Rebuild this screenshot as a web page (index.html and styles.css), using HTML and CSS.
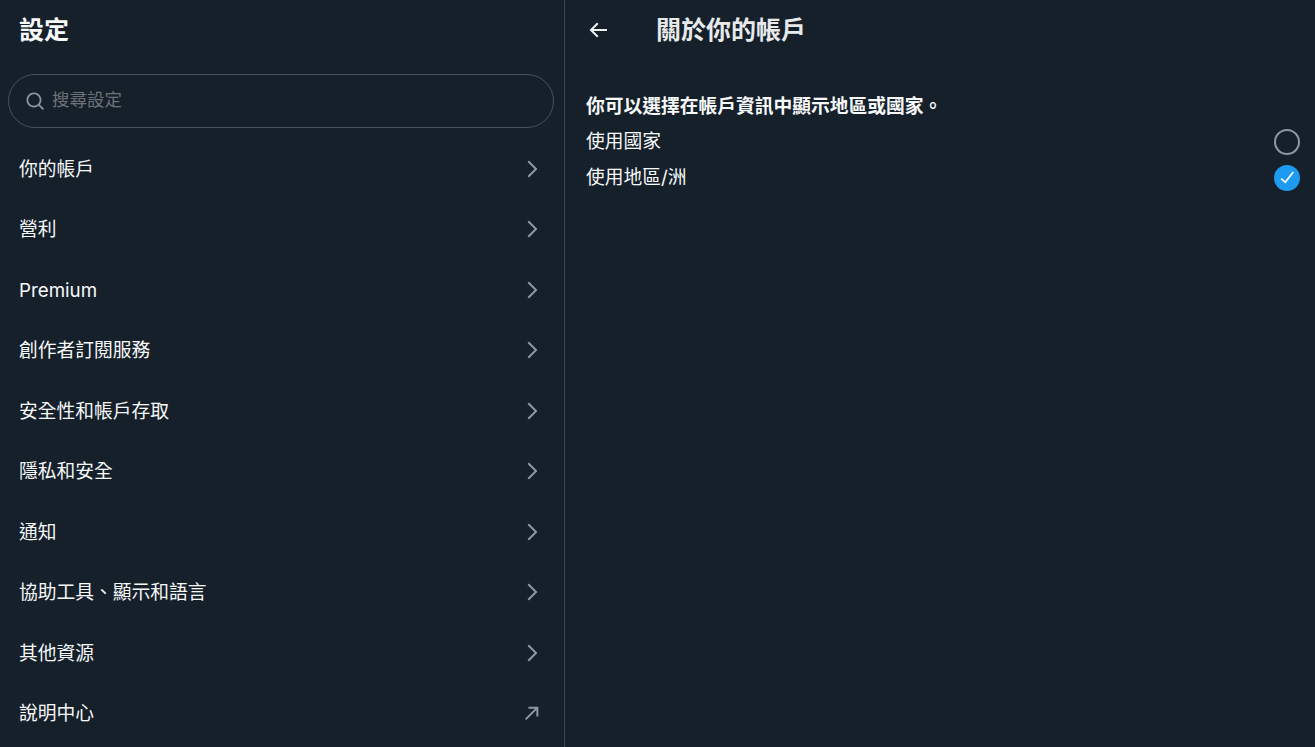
FILE: index.html
```html
<!DOCTYPE html>
<html lang="zh-Hant">
<head>
<meta charset="utf-8">
<title>關於你的帳戶</title>
<link rel="stylesheet" href="styles.css">
</head>
<body>
<div class="app">
  <aside class="sidebar">
    <h1 class="side-title">設定</h1>
    <div class="search-wrap">
      <div class="search">
        <svg class="search-icon" viewBox="0 0 24 24"><path d="M10.25 3.75c-3.59 0-6.5 2.91-6.5 6.5s2.91 6.5 6.5 6.5c1.795 0 3.419-.726 4.596-1.904 1.178-1.177 1.904-2.801 1.904-4.596 0-3.59-2.91-6.5-6.5-6.5zm-8.5 6.5c0-4.694 3.806-8.5 8.5-8.5s8.5 3.806 8.5 8.5c0 1.986-.682 3.815-1.824 5.262l4.781 4.781-1.414 1.414-4.781-4.781c-1.447 1.142-3.276 1.824-5.262 1.824-4.694 0-8.5-3.806-8.5-8.5z"/></svg>
        <span class="placeholder">搜尋設定</span>
      </div>
    </div>
    <nav class="menu">
      <a class="menu-item"><span>你的帳戶</span><svg class="chev" viewBox="0 0 24 24"><path d="M14.586 12L7.543 4.96l1.414-1.42L17.414 12l-8.457 8.46-1.414-1.42L14.586 12z"/></svg></a>
      <a class="menu-item"><span>營利</span><svg class="chev" viewBox="0 0 24 24"><path d="M14.586 12L7.543 4.96l1.414-1.42L17.414 12l-8.457 8.46-1.414-1.42L14.586 12z"/></svg></a>
      <a class="menu-item"><span>Premium</span><svg class="chev" viewBox="0 0 24 24"><path d="M14.586 12L7.543 4.96l1.414-1.42L17.414 12l-8.457 8.46-1.414-1.42L14.586 12z"/></svg></a>
      <a class="menu-item"><span>創作者訂閱服務</span><svg class="chev" viewBox="0 0 24 24"><path d="M14.586 12L7.543 4.96l1.414-1.42L17.414 12l-8.457 8.46-1.414-1.42L14.586 12z"/></svg></a>
      <a class="menu-item"><span>安全性和帳戶存取</span><svg class="chev" viewBox="0 0 24 24"><path d="M14.586 12L7.543 4.96l1.414-1.42L17.414 12l-8.457 8.46-1.414-1.42L14.586 12z"/></svg></a>
      <a class="menu-item"><span>隱私和安全</span><svg class="chev" viewBox="0 0 24 24"><path d="M14.586 12L7.543 4.96l1.414-1.42L17.414 12l-8.457 8.46-1.414-1.42L14.586 12z"/></svg></a>
      <a class="menu-item"><span>通知</span><svg class="chev" viewBox="0 0 24 24"><path d="M14.586 12L7.543 4.96l1.414-1.42L17.414 12l-8.457 8.46-1.414-1.42L14.586 12z"/></svg></a>
      <a class="menu-item"><span>協助工具、顯示和語言</span><svg class="chev" viewBox="0 0 24 24"><path d="M14.586 12L7.543 4.96l1.414-1.42L17.414 12l-8.457 8.46-1.414-1.42L14.586 12z"/></svg></a>
      <a class="menu-item"><span>其他資源</span><svg class="chev" viewBox="0 0 24 24"><path d="M14.586 12L7.543 4.96l1.414-1.42L17.414 12l-8.457 8.46-1.414-1.42L14.586 12z"/></svg></a>
      <a class="menu-item"><span>說明中心</span><svg class="chev" viewBox="0 0 24 24"><path d="M18.36 5.64H8.5v2h6.45L4.93 17.66l1.41 1.41L16.36 9.05v6.45h2V5.64z"/></svg></a>
    </nav>
  </aside>
  <main class="content">
    <header class="head">
      <svg class="back" viewBox="0 0 24 24"><path d="M7.414 13l5.043 5.04-1.414 1.42L3.586 12l7.457-7.46 1.414 1.42L7.414 11H21v2H7.414z"/></svg>
      <h2 class="head-title">關於你的帳戶</h2>
    </header>
    <section class="panel">
      <p class="lead">你可以選擇在帳戶資訊中顯示地區或國家。</p>
      <div class="option"><span>使用國家</span><span class="radio"></span></div>
      <div class="option"><span>使用地區/洲</span><span class="radio on"><svg viewBox="0 0 24 24"><path d="M9.64 18.952l-5.55-4.861 1.317-1.504 3.951 3.459 8.459-10.948L19.4 6.32 9.64 18.952z"/></svg></span></div>
    </section>
  </main>
</div>
</body>
</html>
```
FILE: styles.css
```css
* { box-sizing: border-box; }
html, body { margin: 0; height: 100%; }
body {
  background: #15202b;
  color: #f7f9f9;
  font-family: "Inter", "Noto Sans CJK TC", "Liberation Sans", sans-serif;
  overflow: hidden;
}
.app { display: flex; height: 747px; }
.sidebar { width: 565px; flex: none; border-right: 1px solid #38444d; }
.side-title {
  margin: 0;
  height: 60px;
  padding-left: 19px;
  font-size: 25px;
  font-weight: 700;
  line-height: 60px;
}
.search-wrap { padding: 14px 10px 0 8px; }
.search {
  height: 54px;
  border: 1px solid #425364;
  border-radius: 27px;
  display: flex;
  align-items: center;
  padding-left: 16px;
  gap: 6px;
}
.search-icon { width: 21px; height: 21px; fill: #8b98a5; }
.placeholder { font-size: 17.5px; line-height: 22px; margin-top: -3px; color: #6d7277; }
.menu { padding-top: 10px; }
.menu-item {
  display: flex;
  align-items: center;
  justify-content: space-between;
  height: 60.5px;
  padding: 0 20px 0 19px;
  font-size: 18.75px;
  line-height: 26px;
  color: #f7f9f9;
}
.menu-item span { margin-top: 3px; }
.chev { width: 24px; height: 24px; fill: #8b98a5; margin-top: 1px; }
.content { flex: 1; min-width: 0; }
.head { display: flex; align-items: center; height: 60px; padding-left: 21px; }
.back { width: 24px; height: 24px; fill: #eff3f4; flex: none; }
.head-title { margin: -4px 0 0 46px; font-size: 25px; font-weight: 700; color: #e7e9ea; }
.panel { padding: 34px 15px 0 21px; }
.lead { margin: 0 0 3px; font-size: 18.75px; font-weight: 700; line-height: 25px; }
.option {
  display: flex;
  align-items: center;
  justify-content: space-between;
  height: 36px;
  font-size: 18.75px;
}
.option > span:first-child { margin-top: -1px; }
.radio {
  width: 26px;
  height: 26px;
  margin-top: 3px;
  border: 2px solid #8b98a5;
  border-radius: 50%;
  display: flex;
  align-items: center;
  justify-content: center;
}
.radio.on { background: #1d9bf0; border-color: #1d9bf0; }
.radio svg { width: 21px; height: 21px; fill: #fff; }
```
